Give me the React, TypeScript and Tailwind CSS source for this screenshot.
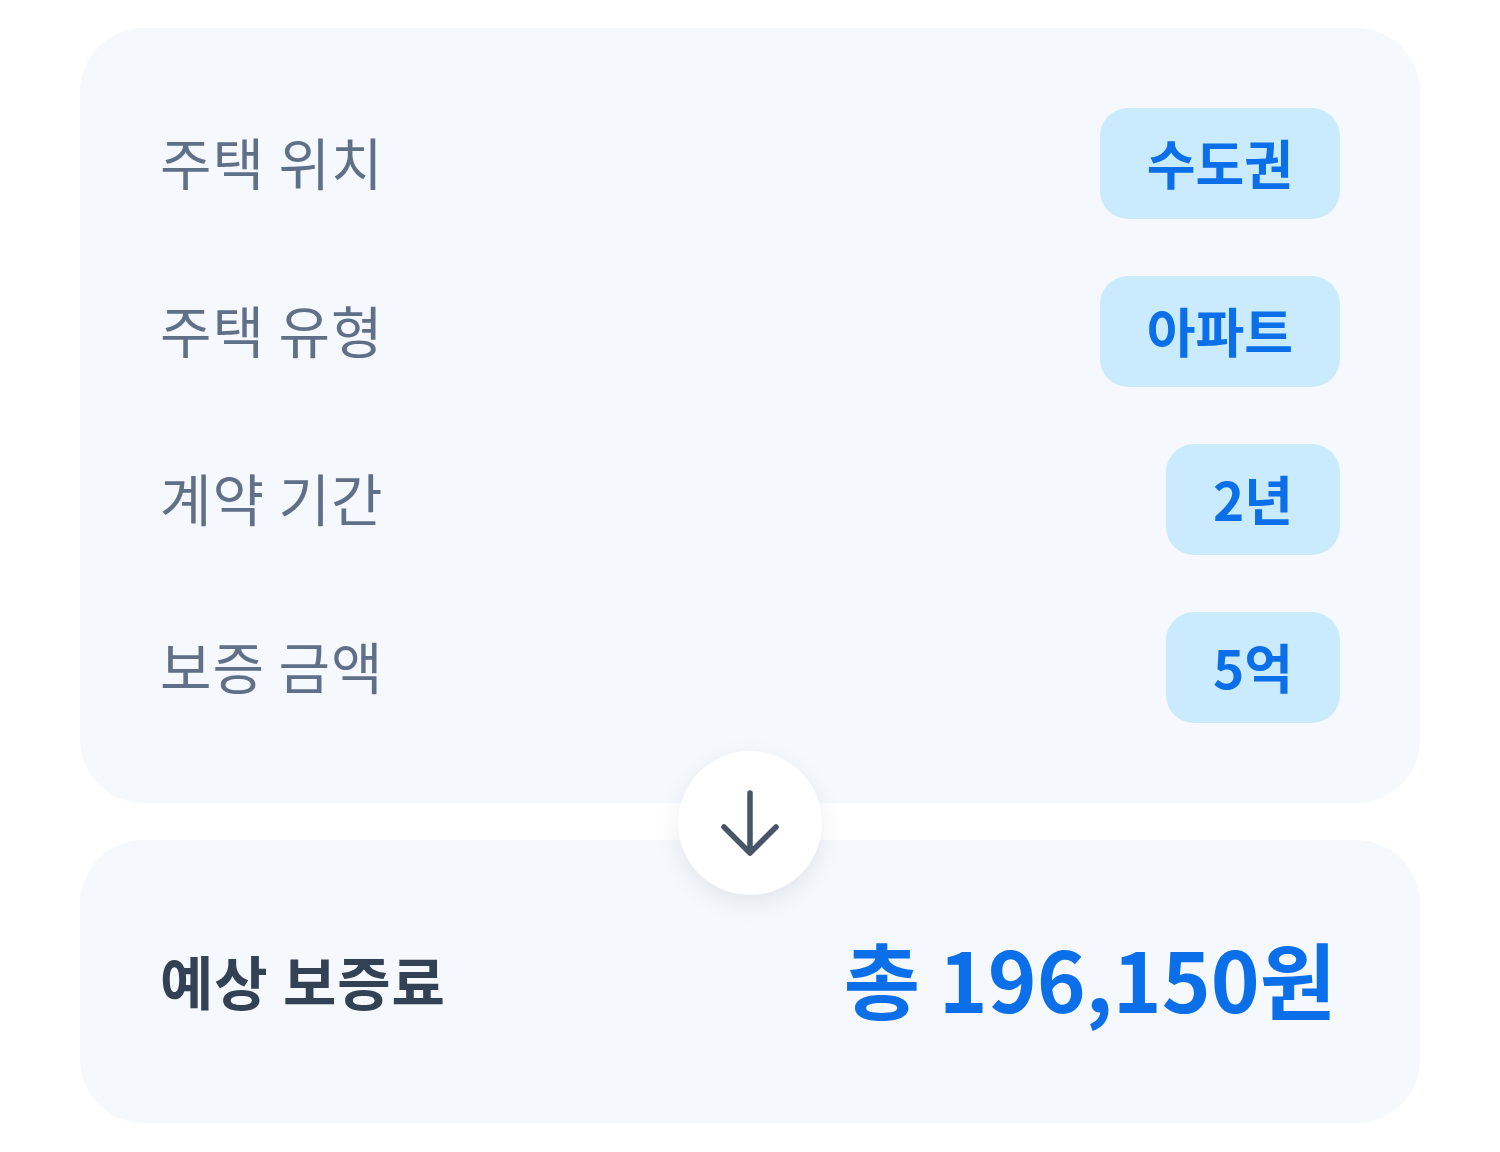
import React from 'react'

interface Condition {
  label: string
  value: string
}

const conditions: Condition[] = [
  { label: '주택 위치', value: '수도권' },
  { label: '주택 유형', value: '아파트' },
  { label: '계약 기간', value: '2년' },
  { label: '보증 금액', value: '5억' },
]

const font = { fontFamily: '"Noto Sans CJK KR", "Noto Sans", sans-serif' }

const ArrowDownIcon = () => (
  <svg width="64" height="68" viewBox="0 0 64 68" fill="none">
    <path
      d="M32 4v60M6 38l26 26 26-26"
      stroke="#475569"
      strokeWidth="5.5"
      strokeLinecap="round"
      strokeLinejoin="round"
    />
  </svg>
)

const App: React.FC = () => {
  return (
    <div className="min-h-screen bg-white" style={font}>
      <div className="relative mx-20 pt-[28px]">
        <div className="rounded-[64px] bg-[#f5f8fc] px-20 py-20 flex flex-col gap-[57px]">
          {conditions.map((c) => (
            <div key={c.label} className="flex items-center justify-between h-[111px]">
              <span className="text-[56px] leading-none text-[#617089] tracking-[1px] -mt-[6px]">
                {c.label}
              </span>
              <span className="h-[111px] px-[47px] flex items-center rounded-[28px] bg-[#c9ebfd] text-[53px] leading-none font-bold text-[#0a6fe8]">
                <span className="-mt-[2px]">{c.value}</span>
              </span>
            </div>
          ))}
        </div>

        <div className="mt-[37px] h-[283px] rounded-[64px] bg-[#f5f8fc] px-20 flex items-center justify-between">
          <span className="text-[58px] leading-none font-bold text-[#334155] tracking-[1px] -mt-[4px]">
            예상 보증료
          </span>
          <span className="text-[83px] leading-none font-bold text-[#0a6fe8] pr-[4px] -mt-[8px]">
            총 196,150원
          </span>
        </div>

        {/* arrow badge sitting across the gap between the two cards */}
        <div className="absolute left-1/2 top-[751px] -translate-x-1/2 w-[144px] h-[144px] rounded-full bg-white flex items-center justify-center shadow-[0_8px_24px_rgba(15,23,42,0.08)]">
          <ArrowDownIcon />
        </div>
      </div>
    </div>
  )
}

export default App
